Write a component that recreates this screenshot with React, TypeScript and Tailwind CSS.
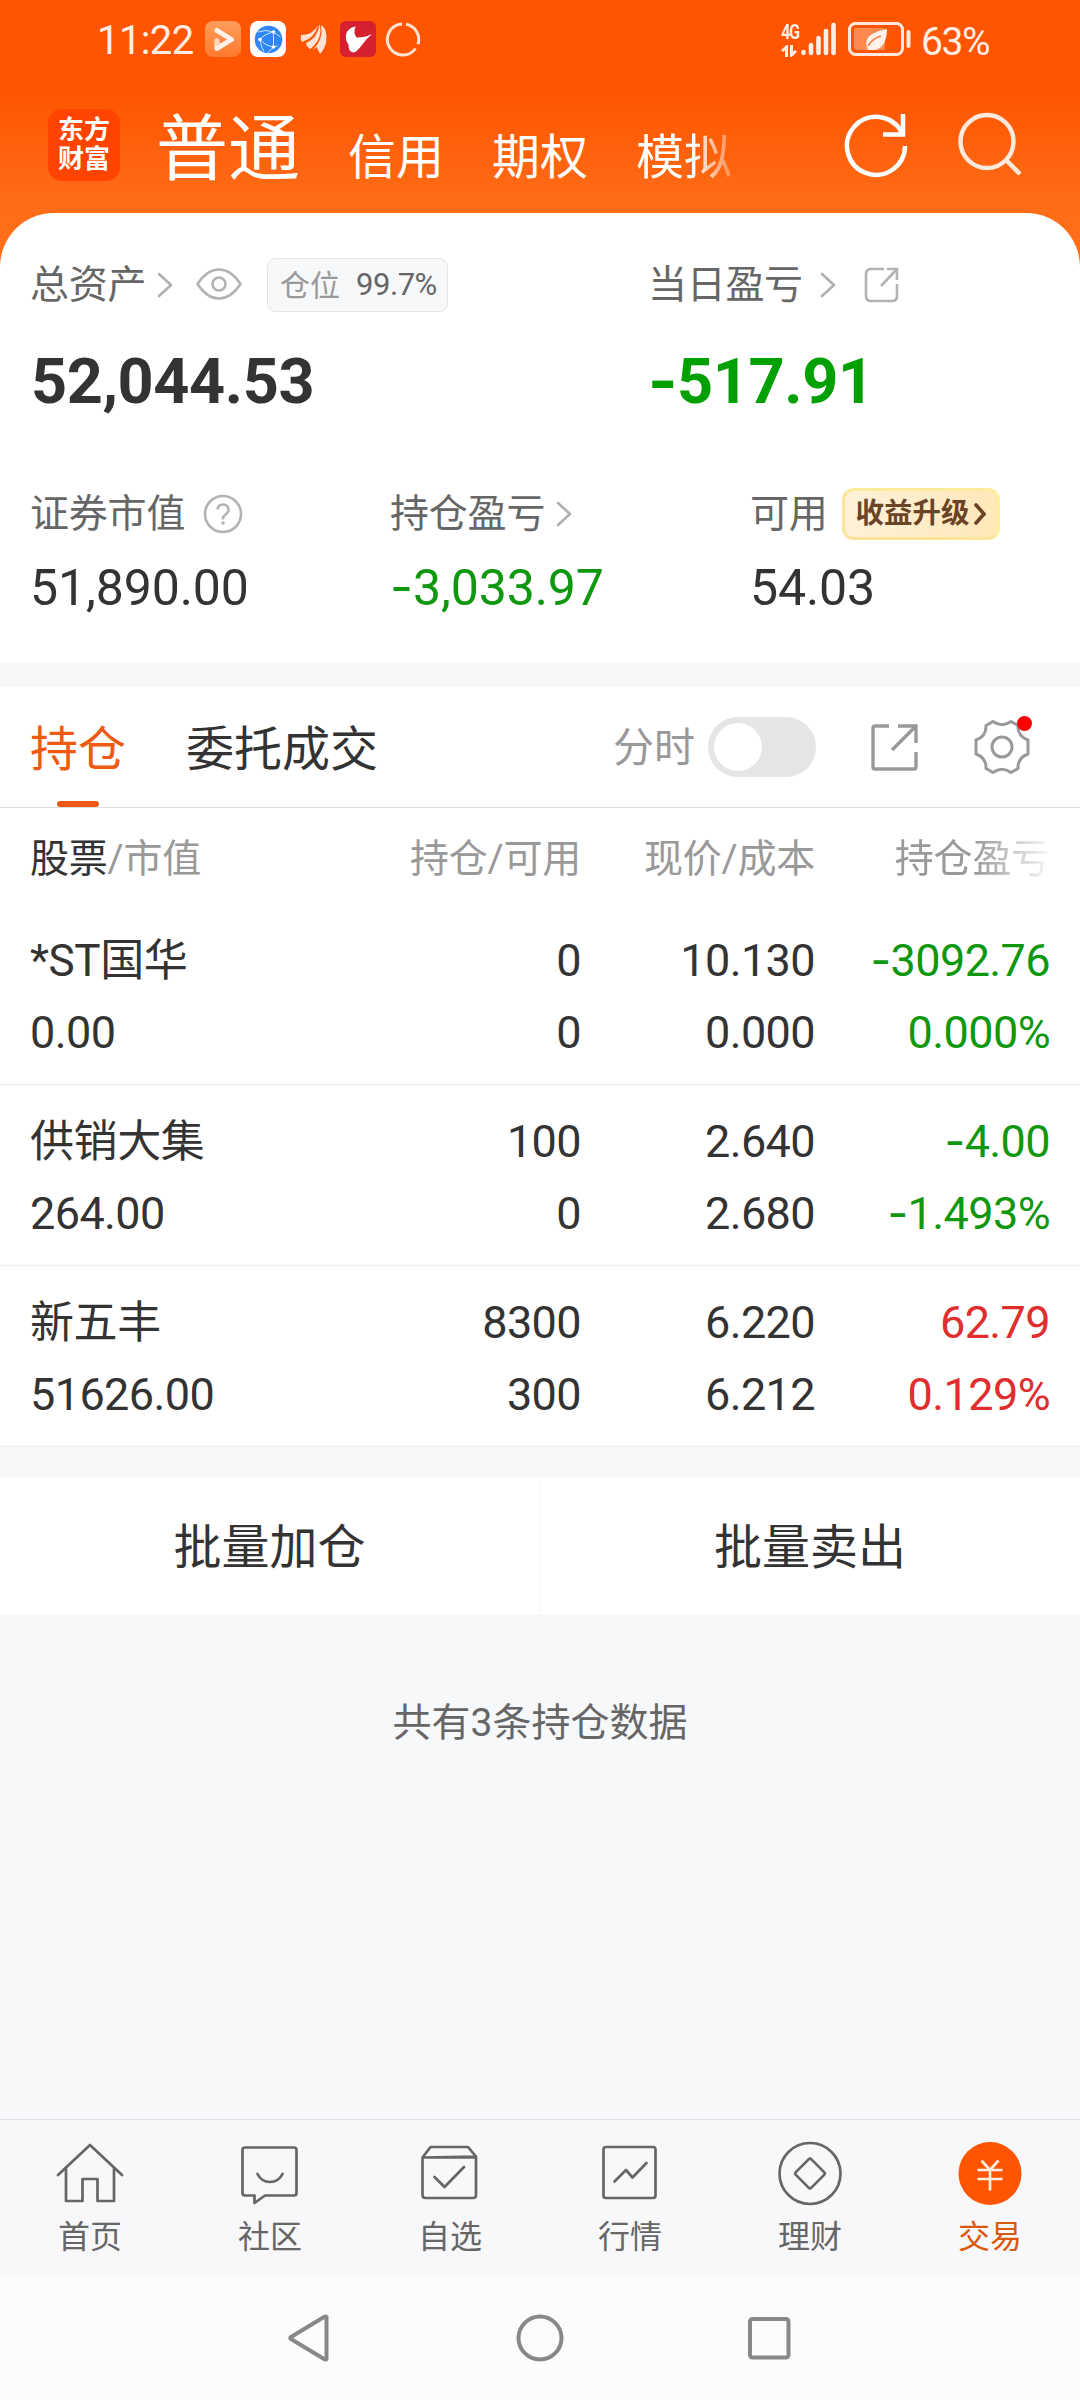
import { useState } from "react";
import type { ReactNode } from "react";

const holdings = [
    { name: "*ST国华", value: "0.00", amount: "0", usable: "0", price: "10.130", cost: "0.000", profit: "-3092.76", rate: "0.000%", color: "text-[#0f970f]" },
    { name: "供销大集", value: "264.00", amount: "100", usable: "0", price: "2.640", cost: "2.680", profit: "-4.00", rate: "-1.493%", color: "text-[#0f970f]" },
    { name: "新五丰", value: "51626.00", amount: "8300", usable: "300", price: "6.220", cost: "6.212", profit: "62.79", rate: "0.129%", color: "text-[#e02d2d]" },
];

const Chevron = ({ className = "" }: { className?: string }) => (
    <svg className={`w-4 h-7 ${className}`} viewBox="0 0 16 28" fill="none" stroke="#b0b0b0" strokeWidth="2.6" strokeLinecap="round" strokeLinejoin="round">
        <path d="M2 3l12 11L2 25" />
    </svg>
);

// Roboto's hyphen is too short for a minus sign, so it is set in Inter
const Num = ({ value }: { value: string }) => (
    <>
        {value.startsWith("-") && <span className="font-['Inter'] leading-none">-</span>}
        {value.replace("-", "")}
    </>
);

// Status bar
const StatusBar = () => (
    <div className="flex items-center h-[78px] pl-[97px] pr-[91px] text-[#ffeee4]">
        <span className="w-[108px] text-[40px] leading-[78px] mt-1 tracking-[-0.6px]">11:22</span>
        <svg className="w-9 h-9" viewBox="0 0 36 36">
            <defs>
                <linearGradient id="play" x1="0" y1="0" x2="0" y2="1">
                    <stop offset="0" stopColor="#ff9d5c" />
                    <stop offset="1" stopColor="#ff7a2e" />
                </linearGradient>
            </defs>
            <rect width="36" height="36" rx="8" fill="url(#play)" />
            <path d="M12 21v6.500L26.500 18.500 12 9.500" fill="none" stroke="#fff2ea" strokeWidth="5" strokeLinejoin="round" strokeLinecap="round" />
            <path d="M12 19.500v3" stroke="#ffd3b5" strokeWidth="5" strokeLinecap="round" />
        </svg>
        <svg className="w-9 h-9 ml-[9px]" viewBox="0 0 36 36">
            <rect width="36" height="36" rx="8" fill="#fff" />
            <circle cx="18.500" cy="18.500" r="13.800" fill="#2f86f6" />
            <g fill="none" stroke="#cfe4ff" strokeWidth="1">
                <path d="M8 11q8-3 15.500 0l7 5M10 18.500Q14 13 23.500 11M10 18.500q5 6 13.500 7.500l4-1M23.500 11v15l-6 6M10 18.500q1 8 4 12" />
            </g>
            <g fill="#fff">
                <circle cx="10" cy="18.500" r="1.800" />
                <circle cx="23.500" cy="11" r="1.800" />
                <circle cx="23.500" cy="26" r="1.800" />
            </g>
        </svg>
        <svg className="w-7 h-8 ml-[14px]" viewBox="0 0 28 32" fill="#ffe3d4">
            <path d="M1 12q12 0 17-10q-3 13-16 17q-2-3-1-7z" />
            <path d="M6 20Q18 15 19.500 1q4 14-9 25q-4-2-4.500-6z" />
            <path d="M13 27Q24 16 21 2q7 4 5 18q-2 7-6 11q-3-6-3-7z" />
        </svg>
        <svg className="w-9 h-9 ml-[12px]" viewBox="0 0 36 36">
            <rect width="36" height="36" rx="6" fill="#d6202f" />
            <path d="M6 14Q7 7 15.700 5.500Q13 12 16.500 16.500Q24 17 32 13Q26 18 21.500 24.500Q17 31 13 31.500Q8 30 8.500 23.500Q5 19 6 14z" fill="#fff" />
        </svg>
        <svg className="w-9 h-9 ml-[9px]" viewBox="0 0 36 36" fill="none" stroke="#ffe3d4" strokeWidth="3">
            <path d="M21 3.200a15.500 15.500 0 0 1 12 20M30.500 27.500a15.500 15.500 0 1 1-13.500-24.500" />
        </svg>

        <div className="ml-auto flex items-center">
            <div className="flex flex-col w-[20px]">
                <span className="text-[18px] leading-[20px] font-bold tracking-[-1.500px] origin-left scale-y-115 scale-x-90">4G</span>
                <svg className="w-4 h-3 mt-[3px]" viewBox="0 0 16 12" fill="none" stroke="currentColor" strokeWidth="3">
                    <path d="M5.500 12V2L1 6M10.500 0v10l4.500-4" />
                </svg>
            </div>
            <svg className="w-[36px] h-[34px]" viewBox="0 0 36 34" stroke="currentColor" strokeWidth="4.600" strokeLinecap="round">
                <path d="M2.500 30v1M10 23v8M17.500 16v15M25 9v22M32.500 3v28" />
            </svg>
            <svg className="w-[64px] h-[34px] ml-[11px]" viewBox="0 0 64 34">
                <rect x="1.500" y="1.500" width="53" height="31" rx="6" fill="none" stroke="#ffe9dd" strokeWidth="3" />
                <rect x="6" y="6" width="31" height="22" rx="2" fill="#ff8a50" />
                <path d="M20 28C14 14 26 10 39 7c0 14-6 22-16 21-3 0-3 0-3 0z" fill="#fff2ea" />
                <path d="M20 24q5-8 13-10" stroke="#ff7a3a" strokeWidth="1.500" fill="none" />
                <path d="M60.500 10v14" stroke="#ffe9dd" strokeWidth="4" strokeLinecap="round" />
            </svg>
            <span className="ml-[9px] text-[39px] leading-[78px] mt-[5px] tracking-[-1.500px]">63%</span>
        </div>
    </div>
);

const Header = () => (
    <div className="flex items-center h-[135px] pl-12 pr-[57px] pb-[1px] text-white">
        <div className="w-[72px] h-[72px] rounded-[14px] bg-[#ff4400] flex flex-col items-center justify-center text-[26px] leading-[29px] font-bold">
            <span>东方</span>
            <span>财富</span>
        </div>
        <div className="flex items-baseline ml-9 mt-[18px] gap-12 text-[48px] leading-[72px] w-[590px]">
            <span className="text-[72px]">普通</span>
            <span>信用</span>
            <span>期权</span>
            <span className="[mask-image:linear-gradient(to_right,#000_58%,transparent_115%)]">模拟</span>
        </div>
        <svg className="w-[66px] h-[66px] ml-auto" viewBox="0 0 66 66" fill="none" stroke="#fff" strokeWidth="4.500">
            <path d="M58.500 20A29 29 0 1 0 62 34" />
            <path d="M60 2v20.500H40" />
        </svg>
        <svg className="w-[66px] h-[66px] ml-[48px]" viewBox="0 0 66 66" fill="none" stroke="#ffe9dd" strokeWidth="4.500">
            <circle cx="30" cy="29.500" r="26.500" />
            <path d="M49 48l14 14" />
        </svg>
    </div>
);

const Stat = ({ label, value, color, children }: { label: string; value: string; color: string; children?: ReactNode }) => (
    <div className="w-[360px] shrink-0">
        <div className="flex items-center h-14 text-[39px] text-[#666]">
            <span className="tracking-[-0.200px]">{label}</span>
            {children}
        </div>
        <div className={`mt-[16px] text-[50px] leading-[60px] tracking-[-0.100px] ${color}`}>
            <Num value={value} />
        </div>
    </div>
);

// Total assets and profit
const Assets = () => (
    <div className="h-[450px] bg-white rounded-t-[54px] pl-[30px] pt-11">
        <div className="flex">
            <div className="w-[618px]">
                <div className="flex items-center h-[56px] text-[39px] text-[#666]">
                    <span className="tracking-[-0.300px] mt-[1px]">总资产</span>
                    <Chevron className="ml-[11px]" />
                    <svg className="w-[46px] h-8 ml-[23px] mb-[2px]" viewBox="0 0 46 32" fill="none" stroke="#b3b3b3" strokeWidth="2.600">
                        <path d="M1.500 16Q11 1.500 23 1.500T44.500 16Q35 30.500 23 30.500T1.500 16z" strokeLinejoin="round" />
                        <circle cx="23" cy="16" r="6.500" />
                    </svg>
                    <div className="flex items-center ml-[25px] w-[181px] h-[54px] rounded-[9px] border border-[#e4e4e6] bg-[#f7f8fa] pl-[12px]">
                        <span className="text-[30px] text-[#999]">仓位</span>
                        <span className="ml-4 pt-[1px] text-[31px] tracking-[-0.500px]">99.7%</span>
                    </div>
                </div>
                <div className="mt-[34px] pl-[1px] text-[63px] leading-[70px] font-bold text-[#333] tracking-[-0.400px]">52,044.53</div>
            </div>
            <div>
                <div className="flex items-center h-[56px] text-[39px] text-[#666]">
                    <span className="tracking-[-0.300px] mt-[1px]">当日盈亏</span>
                    <Chevron className="ml-[17px]" />
                    <svg className="w-[36px] h-[36px] ml-[28px]" viewBox="0 0 36 36" fill="none" stroke="#b3b3b3" strokeWidth="2.600">
                        <path d="M20 2H7Q2 2 2 7v22q0 5 5 5h21q5 0 5-5V17" />
                        <path d="M23 2h10v11M33 2L17 19" />
                    </svg>
                </div>
                <div className="mt-[34px] text-[63px] leading-[70px] font-bold text-[#00a000] tracking-[-0.400px]">
                    <Num value="-517.91" />
                </div>
            </div>
        </div>
        <div className="flex mt-[69px]">
            <Stat label="证券市值" value="51,890.00" color="text-[#333]">
                <svg className="w-10 h-10 ml-[18px]" viewBox="0 0 40 40" fill="none" stroke="#b3b3b3" strokeWidth="2.600">
                    <circle cx="20" cy="20" r="18" />
                    <path d="M14.500 15.500q.5-5 5.500-5t5.500 5q0 3-3 5t-2.500 5" />
                    <circle cx="20" cy="29" r="1" fill="#b3b3b3" strokeWidth="1.500" />
                </svg>
            </Stat>
            <Stat label="持仓盈亏" value="-3,033.97" color="text-[#0f970f]">
                <Chevron className="ml-[11px]" />
            </Stat>
            <Stat label="可用" value="54.03" color="text-[#333]">
                <div className="flex items-center ml-[14px] w-[158px] h-[52px] rounded-[12px] border-[3px] border-[#fbe39a] border-t-[#fdeb9c] border-r-[#fdf09c] bg-linear-to-r from-[#fdf1d8] to-[#ffe8b8] pl-[11px] text-[#6b4428]">
                    <span className="text-[28.500px] font-bold">收益升级</span>
                    <svg className="w-3 h-6 ml-[4px]" viewBox="0 0 12 24" fill="none" stroke="currentColor" strokeWidth="3.600" strokeLinecap="round">
                        <path d="M2 3l8 9-8 9" />
                    </svg>
                </div>
            </Stat>
        </div>
    </div>
);

const Tabs = () => {
    const [minute, setMinute] = useState(false);

    return (
        <div className="flex items-center h-[121px] border-b border-[#dcdcdc] bg-white pl-[30px] pr-[49px] text-[48px] text-[#333]">
            <div className="relative h-full flex items-center pt-[5px] text-[#ee5a10]">
                持仓
                <span className="absolute bottom-0 left-[27px] w-[42px] h-[6px] rounded-full bg-[#ea5a14]" />
            </div>
            <span className="ml-[60px] pt-[5px]">委托成交</span>
            <span className="ml-auto pt-[4px] text-[41px] text-[#999]">分时</span>
            <button
                onClick={() => setMinute(!minute)}
                className={`ml-[13px] flex items-center w-[108px] h-[60px] rounded-full p-[6px] ${minute ? "justify-end bg-[#ea5a14]" : "bg-[#e5e5e7]"}`}
            >
                <span className="w-12 h-12 rounded-full bg-white" />
            </button>
            <svg className="w-[48px] h-[48px] ml-[54px]" viewBox="0 0 48 48" fill="none" stroke="#999" strokeWidth="3.400">
                <path d="M19 3H5q-2 0-2 2v39q0 2 2 2h39q2 0 2-2V29" />
                <path d="M28 3h18v17M46 3L22 27" />
            </svg>
            <div className="relative ml-[55px] w-[58px] h-[58px]">
                <svg className="w-full h-full" viewBox="0 0 58 58" fill="none" stroke="#999" strokeWidth="3" strokeLinejoin="round">
                    <path d="M20 3.500Q29 10 38 3.500L45 7.500Q44.500 18 55 22V36Q44.500 40 45 50.500L38 54.500Q29 48 20 54.500L13 50.500Q13.500 40 3 36V22Q13.500 18 13 7.500Z" />
                    <circle cx="29" cy="29" r="10" />
                </svg>
                <span className="absolute -top-[2px] -right-[1px] w-[15px] h-[15px] rounded-full bg-[#fb0000]" />
            </div>
        </div>
    );
};

const Holdings = () => (
    <div className="bg-white">
        <div className="grid grid-cols-[282px_269px_234px_235px] pl-[30px] h-24 pt-[6px] items-center text-[39px] text-[#999] tracking-[-0.200px] text-right">
            <span className="text-left"><span className="text-[#333]">股票</span>/市值</span>
            <span>持仓/可用</span>
            <span>现价/成本</span>
            <span className="[mask-image:linear-gradient(to_right,#000_68%,transparent_102%)]">持仓盈亏</span>
        </div>
        {holdings.map((item) => (
            <div
                key={item.name}
                className="grid grid-cols-[282px_269px_234px_235px] grid-rows-[72px_72px] content-start pl-[30px] h-[181px] pt-[21px] border-b border-[#ededee] text-[45px] leading-[72px] text-[#333] tracking-[-0.600px] text-right"
            >
                <span className="text-left text-[44px] tracking-[-0.400px]">{item.name}</span>
                <span>{item.amount}</span>
                <span>{item.price}</span>
                <span className={item.color}><Num value={item.profit} /></span>
                <span className="text-left">{item.value}</span>
                <span>{item.usable}</span>
                <span>{item.cost}</span>
                <span className={item.color}><Num value={item.rate} /></span>
            </div>
        ))}
    </div>
);

const navItems = [
    { label: "首页", icon: <path d="M4 38L36 8l32 30M12 31v33h16.500V42h15v22H60V31" /> },
    {
        label: "社区",
        icon: <path d="M11 10.500h49q2.500 0 2.500 2.500v43q0 2.500-2.500 2.500H31L20.500 66v-7.500H11q-2.500 0-2.500-2.500V13q0-2.500 2.500-2.500zM23.500 37q4 8 12.500 8t12.500-8" />,
    },
    {
        label: "自选",
        icon: <path d="M8.500 20.500L16.500 10h37.500l8 9.500zV58q0 3 3 3H59q3 0 3-3V20.500H8.500M20.500 40l10 10 19.500-20" />,
    },
    {
        label: "行情",
        icon: (
            <>
                <rect x="9.500" y="10" width="52" height="51" rx="2.500" />
                <path d="M20.500 44.500L32 33l6.500 7.500 14-14.500" />
            </>
        ),
    },
    {
        label: "理财",
        icon: (
            <>
                <circle cx="36" cy="36.500" r="30.500" />
                <rect x="25" y="25.500" width="22" height="22" rx="2" transform="rotate(45 36 36.500)" />
            </>
        ),
    },
    {
        label: "交易",
        active: true,
        icon: (
            <>
                <circle cx="36" cy="36.500" r="31.500" fill="#ff5500" stroke="none" />
                <path d="M27.500 23.500l8.500 9.500 8.500-9.500M36 33v20.500M23.500 33h25M23.500 42h25" stroke="#ffeee0" strokeLinecap="butt" />
            </>
        ),
    },
];

const BottomNav = () => (
    <div className="grid grid-cols-6 h-[157px] border-t border-[#dfe1e4] bg-[#f8f8fa] pt-[17px]">
        {navItems.map((item) => (
            <div key={item.label} className="flex flex-col items-center">
                <svg className="w-[72px] h-[72px]" viewBox="0 0 72 72" fill="none" stroke="#666" strokeWidth="2.700" strokeLinejoin="round" strokeLinecap="round">
                    {item.icon}
                </svg>
                <span className={`mt-[4px] text-[32px] leading-[48px] ${item.active ? "text-[#d9590f]" : "text-[#666]"}`}>{item.label}</span>
            </div>
        ))}
    </div>
);

// Android navigation keys
const SystemBar = () => (
    <div className="flex items-center h-[124px] bg-[#fcfcfc] pl-[285px]">
        <svg className="w-12 h-[50px]" viewBox="0 0 48 50" fill="none" stroke="#888" strokeWidth="4" strokeLinejoin="round">
            <path d="M41.500 4v42Q41 47 39 46L6 26q-1.500-1 0-2L39 4q2-1 2.500 0z" />
        </svg>
        <svg className="w-[50px] h-[50px] ml-[182px]" viewBox="0 0 50 50" fill="none" stroke="#888" strokeWidth="4">
            <circle cx="25" cy="25" r="21.500" />
        </svg>
        <svg className="w-[50px] h-[50px] ml-[179px]" viewBox="0 0 50 50" fill="none" stroke="#888" strokeWidth="4">
            <rect x="6" y="6" width="38.500" height="38.500" rx="2.500" />
        </svg>
    </div>
);

export default function App() {
    return (
        <div className="w-[1080px] h-[2400px] flex flex-col overflow-hidden bg-[#f7f8fa] font-['Roboto','Noto_Sans_CJK_SC',sans-serif]">
            <div className="bg-[linear-gradient(to_bottom,#ff5500_90px,#ff6d18_210px)]">
                <StatusBar />
                <Header />
                <Assets />
            </div>
            <div className="h-6" />
            <Tabs />
            <Holdings />
            <div className="grid grid-cols-2 h-[138px] mt-[30px] bg-white text-[48px] leading-[142px] text-[#333] text-center">
                <button className="border-r border-[#f5f5f6]">批量加仓</button>
                <button>批量卖出</button>
            </div>
            <div className="flex-1 pt-[78px] text-center text-[39px] leading-[60px] text-[#666]">共有3条持仓数据</div>
            <BottomNav />
            <SystemBar />
        </div>
    );
}
